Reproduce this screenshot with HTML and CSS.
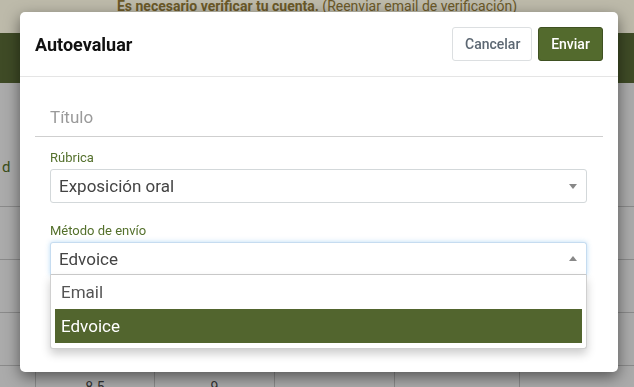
FILE: index.html
```html
<!DOCTYPE html>
<html lang="es">
<head>
    <meta charset="UTF-8">
    <meta name="viewport" content="width=device-width, initial-scale=1.0">
    <title>Autoevaluar</title>
    <link rel="stylesheet" href="styles.css">
</head>
<body>
<!-- Fondo de la página -->
<div class="page">
    <div class="verify-bar">
        <strong>Es necesario verificar tu cuenta.</strong> (Reenviar email de verificación)
    </div>
    <div class="navbar"></div>

    <div class="grid">
        <div class="grid-row grid-head">
            <div class="cell first">d</div>
            <div class="cell"></div>
            <div class="cell"></div>
            <div class="cell"></div>
            <div class="cell"></div>
            <div class="cell last"></div>
        </div>
        <div class="grid-row">
            <div class="cell first"></div>
            <div class="cell"></div>
            <div class="cell"></div>
            <div class="cell"></div>
            <div class="cell"></div>
            <div class="cell last"></div>
        </div>
        <div class="grid-row">
            <div class="cell first"></div>
            <div class="cell"></div>
            <div class="cell"></div>
            <div class="cell"></div>
            <div class="cell"></div>
            <div class="cell last"></div>
        </div>
        <div class="grid-row">
            <div class="cell first"></div>
            <div class="cell"></div>
            <div class="cell"></div>
            <div class="cell"></div>
            <div class="cell"></div>
            <div class="cell last"></div>
        </div>
        <div class="grid-row">
            <div class="cell first"></div>
            <div class="cell">8.5</div>
            <div class="cell">9</div>
            <div class="cell"></div>
            <div class="cell"></div>
            <div class="cell last"></div>
        </div>
    </div>
</div>

<div class="backdrop"></div>

<!-- Modal de autoevaluación -->
<div class="modal">
    <div class="modal-header">
        <h4 class="modal-title">Autoevaluar</h4>
        <div class="modal-actions">
            <button class="btn btn-default">Cancelar</button>
            <button class="btn btn-primary">Enviar</button>
        </div>
    </div>

    <div class="modal-body">
        <input type="text" class="title-input" placeholder="Título">

        <div class="form-group">
            <label>Rúbrica</label>
            <div class="select">
                <span>Exposición oral</span>
                <span class="caret"></span>
            </div>
        </div>

        <div class="form-group last-group">
            <label>Método de envío</label>
            <div class="select focused">
                <span>Edvoice</span>
                <span class="caret up"></span>
                <div class="dropdown">
                    <div class="option">Email</div>
                    <div class="option active">Edvoice</div>
                </div>
            </div>
        </div>
    </div>
</div>
</body>
</html>
```

FILE: styles.css
```css
/* Página base */
body {
    margin: 0;
    font-family: Roboto, 'Liberation Sans', sans-serif;
    background-color: #e4e4e4;
    overflow: hidden;
    height: 387px;
}

/* Barra de verificación */
.verify-bar {
    height: 33px;
    background-color: #fcf8e3;
    color: #8f7736;
    font-size: 14px;
    line-height: 12px;
    text-align: center;
}

.navbar {
    height: 50px;
    background-color: #546433;
}

/* Tabla de fondo */
.grid {
    background-color: #e4e4e4;
}

.grid-row {
    display: flex;
    height: 52px;
    border-bottom: 1px solid #b8b8b8;
}

.grid-head {
    height: 123px;
}

.cell {
    box-sizing: border-box;
    width: 120px;
    border-right: 1px solid #b8b8b8;
    font-size: 14px;
    color: #444;
    text-align: center;
    padding-top: 13px;
}

.cell.first {
    width: 36px;
    text-align: left;
    padding-left: 2px;
    color: #4f6b26;
    font-size: 15px;
}

.grid-head .cell {
    padding-top: 75px;
}

.cell:nth-child(2) {
    width: 119px;
}

.cell:nth-child(5) {
    width: 125px;
}

.cell.last {
    flex: 1;
    border-right: none;
}

/* Fondo oscuro del modal */
.backdrop {
    position: fixed;
    inset: 0;
    background-color: rgba(0, 0, 0, 0.25);
}

/* Modal */
.modal {
    position: absolute;
    top: 12px;
    left: 20px;
    width: 598px;
    background-color: #fff;
    border-radius: 5px;
    box-shadow: 0 5px 15px rgba(0, 0, 0, 0.5);
}

.modal-header {
    display: flex;
    justify-content: space-between;
    align-items: center;
    padding: 15px;
    border-bottom: 1px solid #e5e5e5;
}

.modal-title {
    margin: 0;
    font-size: 18px;
    font-weight: bold;
    color: #111;
}

.modal-actions {
    display: flex;
    gap: 6px;
}

.btn {
    height: 34px;
    padding: 0 12px;
    border-radius: 3px;
    font-family: Roboto, 'Liberation Sans', sans-serif;
    font-size: 14px;
    font-weight: 500;
    cursor: pointer;
}

.btn-default {
    width: 80px;
    background-color: #fff;
    color: #5d6873;
    border: 1px solid #dcdfe1;
}

.btn-primary {
    width: 65px;
    background-color: #536a2d;
    color: #fff;
    border: 1px solid #3f5122;
}

/* Cuerpo del modal */
.modal-body {
    padding: 15px 15px 15px;
}

.title-input {
    display: block;
    box-sizing: border-box;
    width: 100%;
    height: 45px;
    padding: 15px 15px 9px;
    border: none;
    border-bottom: 1px solid #cfcfcf;
    font-family: Roboto, 'Liberation Sans', sans-serif;
    font-size: 17px;
    line-height: 20px;
    outline: none;
    margin-bottom: 13px;
}

.title-input::placeholder {
    color: #9a9a9a;
}

.form-group {
    padding: 0 16px 0 15px;
    margin-bottom: 20px;
}

.last-group {
    margin-bottom: 82px;
}

.form-group label {
    display: block;
    font-size: 13px;
    line-height: 16px;
    color: #54702c;
    margin-bottom: 3px;
}

/* Selector estilo selectize */
.select {
    position: relative;
    box-sizing: border-box;
    height: 34px;
    display: flex;
    align-items: center;
    justify-content: space-between;
    padding: 0 9px 0 8px;
    border: 1px solid #d3d8da;
    border-radius: 3px;
    font-size: 17px;
    color: #444;
}

.select.focused {
    height: 33px;
    border-color: #c6dcf0;
    border-bottom-color: #cccccc;
    border-radius: 3px 3px 0 0;
    box-shadow: 0 0 5px rgba(102, 175, 233, 0.45);
}

.caret {
    width: 0;
    height: 0;
    border-left: 4px solid transparent;
    border-right: 4px solid transparent;
    border-top: 5px solid #888;
}

.caret.up {
    border-top: none;
    border-bottom: 5px solid #888;
}

.dropdown {
    position: absolute;
    top: 100%;
    left: -1px;
    right: -1px;
    margin-top: 1px;
    padding: 0 4px 5px 4px;
    background-color: #fff;
    border: 1px solid #d0d0d0;
    border-top: none;
    border-radius: 0 0 3px 3px;
    box-shadow: 0 5px 10px rgba(0, 0, 0, 0.2);
}

.option {
    height: 34px;
    line-height: 34px;
    padding-left: 6px;
    font-size: 17px;
    color: #555;
}

.option.active {
    background-color: #52652e;
    color: #fff;
}
```
